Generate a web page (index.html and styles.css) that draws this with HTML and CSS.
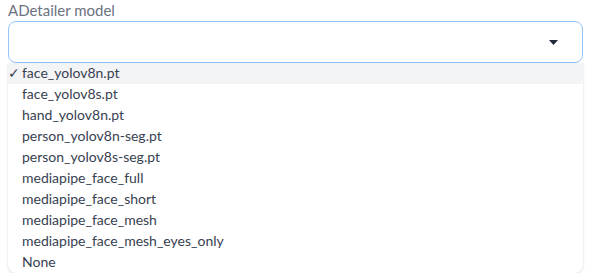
FILE: index.html
```html
<!DOCTYPE html>
<html>
<head>
<meta charset="utf-8">
<link rel="stylesheet" href="styles.css">
</head>
<body>
<div class="field">
  <label class="label">ADetailer model</label>
  <div class="select">
    <span class="value"></span>
    <svg class="caret" width="9" height="5" viewBox="0 0 9 5"><path d="M0 0 H9 L4.5 5 Z" fill="#1f2937"/></svg>
  </div>
  <ul class="options">
    <li class="option selected"><span class="check">✓</span>face_yolov8n.pt</li>
    <li class="option">face_yolov8s.pt</li>
    <li class="option">hand_yolov8n.pt</li>
    <li class="option">person_yolov8n-seg.pt</li>
    <li class="option">person_yolov8s-seg.pt</li>
    <li class="option">mediapipe_face_full</li>
    <li class="option">mediapipe_face_short</li>
    <li class="option">mediapipe_face_mesh</li>
    <li class="option">mediapipe_face_mesh_eyes_only</li>
    <li class="option">None</li>
  </ul>
</div>
</body>
</html>
```
FILE: styles.css
```css
html, body {
  margin: 0;
  padding: 0;
  background: #ffffff;
}
body {
  font-family: "Lato", "Noto Sans", sans-serif;
  padding: 0 7px 0 8px;
}
.field {
  display: flex;
  flex-direction: column;
}
.label {
  color: #6b7280;
  font-size: 15px;
  line-height: 20px;
  height: 21px;
}
.select {
  height: 42px;
  box-sizing: border-box;
  border: 1px solid #93c5fd;
  border-radius: 8px;
  display: flex;
  align-items: center;
  justify-content: flex-end;
  padding-right: 24px;
}
.caret {
  display: block;
  margin-top: 1px;
}
.options {
  list-style: none;
  margin: 0;
  padding: 0;
  border-radius: 0 0 8px 8px;
  box-shadow: 0 1px 3px rgba(0, 0, 0, 0.12), 0 0 1px rgba(0, 0, 0, 0.08);
  background: #fff;
  overflow: hidden;
}
.option {
  height: 21px;
  line-height: 20px;
  font-size: 14px;
  color: #374151;
  padding-left: 14px;
  position: relative;
}
.option.selected {
  background: #f3f4f6;
}
.check {
  position: absolute;
  left: 0;
  top: 0;
}
```
